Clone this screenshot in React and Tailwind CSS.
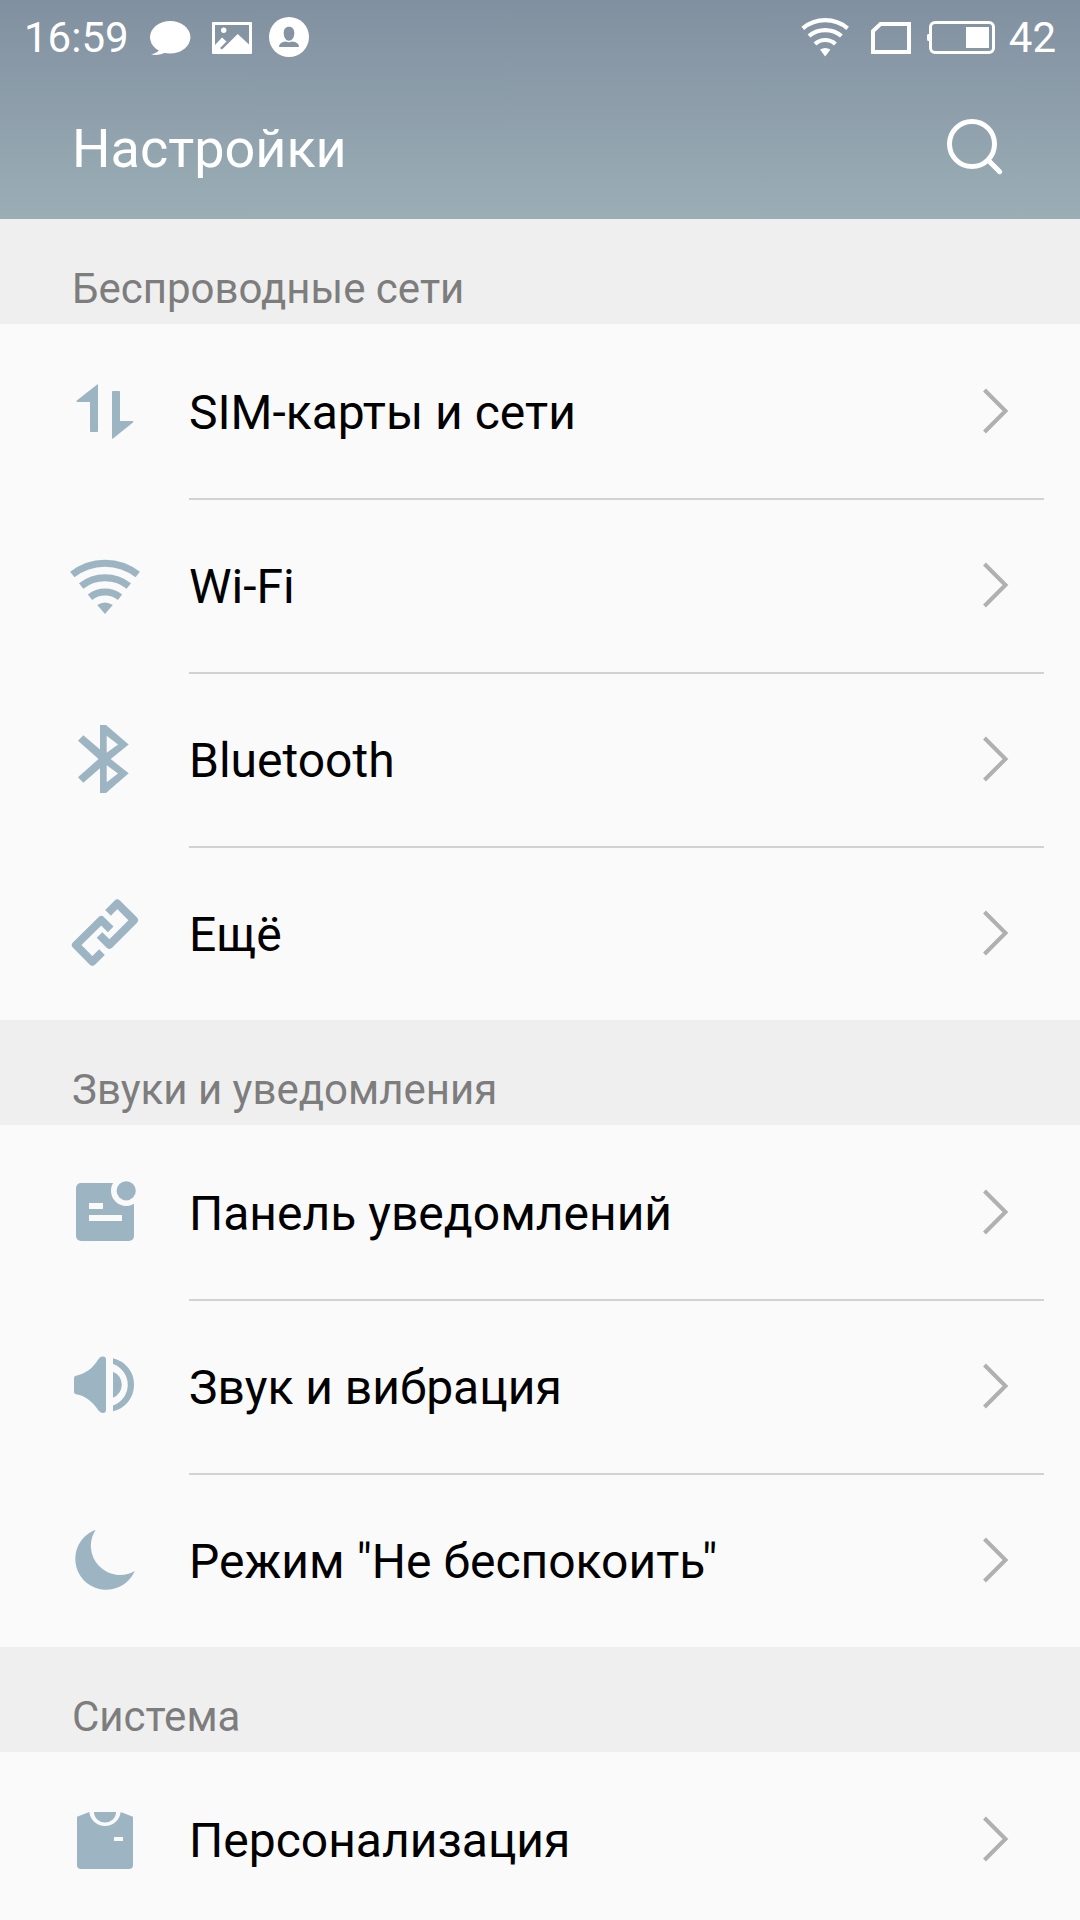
import React from 'react';

// Menu icons share a 72x72 grid
const icons = {
  sim: (
    <path
      d="M28.2 9.4Q29 9 29 10V56.2Q29 57 28.2 57H21.8Q21 57 21 56.2V27H8Q7 26.6 7.8 25.4ZM43 16.8Q43 16 43.8 16H50.2Q51 16 51 16.8V46H63.8Q65 46.4 64 47.4L44 63.4Q43 64 43 63Z"
    />
  ),
  wifi: (
    <>
      <g fill="none" stroke="currentColor" strokeWidth="7">
        <path d="M3.3 25.6A52.5 52.5 0 0 1 68.7 25.6" />
        <path d="M12.2 36.9A38.5 38.5 0 0 1 59.8 36.9" />
        <path d="M21 48.2A24.5 24.5 0 0 1 51 48.2" />
      </g>
      <path d="M28.2 56A14 14 0 0 1 43.8 56L36 65Z" />
    </>
  ),
  bluetooth: (
    <path
      fillRule="evenodd"
      d="M31 2H37L59.7 21.5 41.7 36 59.7 50.3 37 70H31V45.3L14.3 59.8 9 54.2 29.5 36 9 17.7 14.3 12.2 31 26.6ZM37.7 12.8V29.8L49 21.4ZM37.7 42.2V59.2L49 50.6Z"
    />
  ),
  link: (
    <g fill="none" stroke="currentColor" strokeWidth="8" strokeLinejoin="round">
      <path d="M39 15.8L48.3 6.5 65 23.2 40.5 47.8 30.5 38" />
      <path d="M41.7 32.3L32.3 23 6.9 48 23.4 64.7 33 55.2" />
    </g>
  ),
  panel: (
    <>
      <rect x="7" y="7" width="58" height="58" rx="5" />
      <circle cx="57.2" cy="14.8" r="15.2" className="text-[#fafafa]" fill="currentColor" />
      <circle cx="57.2" cy="14.8" r="9.6" />
      <path d="M20 27H34V33H20ZM20 39H53V45H20Z" className="text-[#fafafa]" fill="currentColor" />
    </>
  ),
  sound: (
    <>
      <path d="M5 28Q5 26 7 25.8C17 23.5 24 18 29.5 9Q31 6.6 33.8 6.6 37 6.6 37 9.6V60Q37 63 33.8 63 31 63 29.5 60.6C24 52 17 46 7 44.2Q5 44 5 42Z" />
      <path d="M44 8.2A27.2 27.2 0 0 1 44 61.2V55.4A21.9 21.9 0 0 0 44 14Z" />
      <path d="M44 21.7A14 14 0 0 1 44 47.7Z" />
    </>
  ),
  moon: <path d="M26.7 5.7A31 31 0 1 0 65.8 47 29.2 29.2 0 0 1 26.7 5.7Z" />,
  shirt: (
    <>
      <path d="M8 13.7L20.3 9A15.8 15.8 0 0 0 51.7 9L64 13.7V62Q64 66 60 66H12Q8 66 8 62Z" />
      <path d="M25 9H47A11 10.5 0 0 1 25 9Z" />
      <path d="M45 34H54V38H45Z" className="text-[#fafafa]" fill="currentColor" />
    </>
  ),
};

const sections = [
  {
    title: 'Беспроводные сети',
    items: [
      { icon: 'sim', label: 'SIM-карты и сети' },
      { icon: 'wifi', label: 'Wi-Fi' },
      { icon: 'bluetooth', label: 'Bluetooth' },
      { icon: 'link', label: 'Ещё' },
    ],
  },
  {
    title: 'Звуки и уведомления',
    items: [
      { icon: 'panel', label: 'Панель уведомлений' },
      { icon: 'sound', label: 'Звук и вибрация' },
      { icon: 'moon', label: 'Режим "Не беспокоить"' },
    ],
  },
  {
    title: 'Система',
    items: [{ icon: 'shirt', label: 'Персонализация' }],
  },
];

function StatusBar() {
  return (
    <div className="flex h-[74px] items-center justify-between px-6 text-[42px] leading-none">
      <div className="flex items-center">
        <span className="w-[125px] pt-0.5">16:59</span>
        <svg className="h-11 w-[42px]" viewBox="149 15 42 44" fill="currentColor">
          <ellipse cx="170.2" cy="37.3" rx="20.2" ry="16.3" />
          <path d="M156 47L160 49Q158 53 151 54.3 158 56.3 166 52.5Z" />
        </svg>
        <svg className="ml-[21px] h-11 w-10" viewBox="212 15 40 44" fill="currentColor">
          <path fillRule="evenodd" d="M213 22H251Q252 22 252 23V53Q252 54 251 54H213Q212 54 212 53V23Q212 22 213 22ZM215 25V45L222 37.5 226.5 41.5 220 48 222 49.5 237.7 34 249 44.5V25Z" />
          <circle cx="223.7" cy="30.3" r="2.7" />
        </svg>
        <svg className="ml-[17px] h-11 w-10" viewBox="269 15 40 44" fill="currentColor">
          <circle cx="289" cy="37" r="20" />
          <path
            className="text-[#8593a2]"
            fill="currentColor"
            d="M289 26.7C292.5 26.7 294.3 29 294.3 33 294.3 37.5 292 40.7 289 40.7S283.7 37.5 283.7 33C283.7 29 285.5 26.7 289 26.7ZM279 47Q279 42 286 41.5 289 43 292 41.5 299 42 299 47Z"
          />
        </svg>
      </div>
      <div className="flex items-center">
        <svg className="h-11 w-12" viewBox="801 15 48 44" fill="none" stroke="currentColor" strokeWidth="4.2">
          <path d="M802.8 28.3A35 35 0 0 1 847.6 28.3M809 36A25 25 0 0 1 841.4 36M815 44A15 15 0 0 1 835.4 44" />
          <path d="M820 49.6Q825.2 46.2 830.4 49.6L825.2 56.6Z" fill="currentColor" stroke="none" />
        </svg>
        <svg className="ml-[22px] h-11 w-10" viewBox="871 15 40 44" fill="none" stroke="currentColor" strokeWidth="4">
          <path d="M873 52V31L880.5 24H909V52Z" />
        </svg>
        <svg className="ml-4 h-11 w-[68px]" viewBox="927 15 68 44" fill="currentColor">
          <rect x="930.5" y="22.5" width="63" height="30" rx="4.5" fill="none" stroke="currentColor" strokeWidth="3" />
          <path d="M929 34H928Q927 34 927 36V39Q927 41 928 41H929ZM966 27H989V48H966Z" />
        </svg>
        <span className="ml-[14px] pt-0.5">42</span>
      </div>
    </div>
  );
}

function Row({ icon, label, divided }) {
  return (
    <div className="flex h-[174px] pl-[69px] pr-9">
      <svg className="mt-[51px] h-[72px] w-[72px] shrink-0 text-[#9db5c2]" viewBox="0 0 72 72" fill="currentColor">
        {icons[icon]}
      </svg>
      <div
        className={`ml-12 flex flex-1 items-center justify-between border-t-2 pr-[35px] ${
          divided ? 'border-[#d2d2d2]' : 'border-transparent'
        }`}
      >
        <span className="pt-0.5 text-[48px] leading-none text-black">{label}</span>
        <svg className="-mt-0.5 h-12 w-7 text-[#b0b0b0]" viewBox="0 0 28 48" fill="none" stroke="currentColor" strokeWidth="4">
          <path d="M3.5 3L24.5 24 3.5 45" />
        </svg>
      </div>
    </div>
  );
}

export default function App() {
  return (
    <div className="h-[1920px] w-[1080px] overflow-hidden bg-[#fafafa] font-['Roboto',sans-serif]">
      <header className="h-[219px] bg-linear-to-b from-[#8190a0] to-[#9baeb6] text-white">
        <StatusBar />
        <div className="flex h-[145px] items-center justify-between px-[72px] pt-[3px]">
          <h1 className="pt-px text-[54px] leading-none">Настройки</h1>
          <svg className="h-16 w-16" viewBox="944 116 64 64" fill="none" stroke="currentColor" strokeWidth="5" strokeLinecap="round">
            <circle cx="972" cy="144" r="22.5" />
            <path d="M989 161L999.7 171.7" />
          </svg>
        </div>
      </header>

      {sections.map((section) => (
        <section key={section.title}>
          <h2 className="h-[105px] bg-[#efefef] pl-[72px] pt-[49px] text-[42px] leading-none text-[#7d7d7d]">
            {section.title}
          </h2>
          {section.items.map((item, i) => (
            <Row key={item.label} icon={item.icon} label={item.label} divided={i > 0} />
          ))}
        </section>
      ))}
    </div>
  );
}
